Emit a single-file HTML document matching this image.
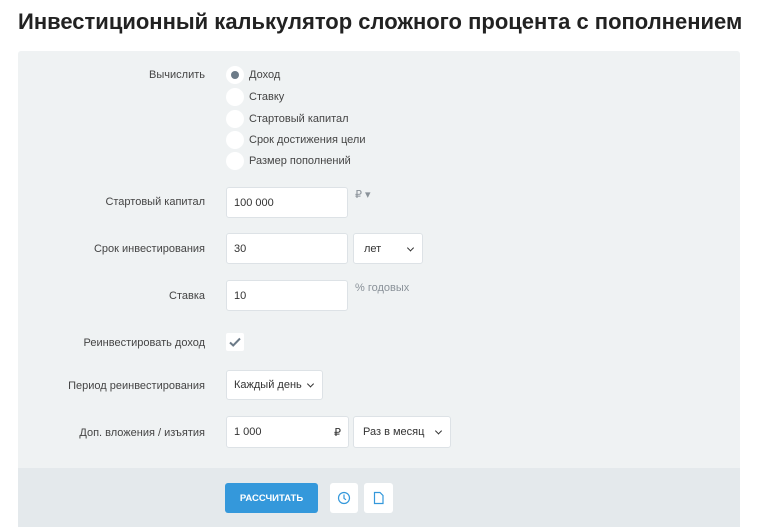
<!DOCTYPE html>
<html><head><meta charset="utf-8"><style>
*{box-sizing:border-box;margin:0;padding:0}
body{width:758px;height:527px;background:#fff;font-family:"Liberation Sans",sans-serif;color:#333;position:relative;overflow:hidden}
h1{position:absolute;left:18px;top:9px;font-size:22px;font-weight:bold;color:#222;white-space:nowrap}
.panel{position:absolute;left:18px;top:51px;width:722px;height:476px;background:#eff2f3;border-radius:3px}
.foot{position:absolute;left:18px;top:468px;width:722px;height:59px;background:#e4e9ec}
.lbl{position:absolute;right:553px;font-size:11px;color:#444;text-align:right;white-space:nowrap}
.t{position:absolute;font-size:11px;color:#444;white-space:nowrap}
.radio{position:absolute;left:226px;width:18px;height:18px;border-radius:50%;background:#fff}
.radio.on::after{content:"";position:absolute;left:5px;top:5px;width:8px;height:8px;border-radius:50%;background:#6c7b88}
.box{position:absolute;background:#fff;border:1px solid #dde2e6;border-radius:3px;font-size:11px;color:#333;padding-left:7px;display:flex;align-items:center}
.sel::after{content:"";position:absolute;right:9px;top:50%;width:4px;height:4px;border-right:1.5px solid #333;border-bottom:1.5px solid #333;transform:translateY(-70%) rotate(45deg)}
.gray{color:#8a9299}
</style></head><body>
<h1>Инвестиционный калькулятор сложного процента с пополнением</h1>
<div class="panel"></div>
<div class="foot"></div>

<div class="lbl" style="top:69px">Вычислить</div>
<div class="radio on" style="top:66px"></div><div class="t" style="left:249px;top:69px">Доход</div>
<div class="radio" style="top:88px"></div><div class="t" style="left:249px;top:91px">Ставку</div>
<div class="radio" style="top:110px"></div><div class="t" style="left:249px;top:113px">Стартовый капитал</div>
<div class="radio" style="top:131px"></div><div class="t" style="left:249px;top:134px">Срок достижения цели</div>
<div class="radio" style="top:152px"></div><div class="t" style="left:249px;top:155px">Размер пополнений</div>

<div class="lbl" style="top:196px">Стартовый капитал</div>
<div class="box" style="left:226px;top:187px;width:122px;height:31px">100 000</div>
<div class="t gray" style="left:355px;top:188px">₽ ▾</div>

<div class="lbl" style="top:243px">Срок инвестирования</div>
<div class="box" style="left:226px;top:233px;width:122px;height:31px">30</div>
<div class="box sel" style="left:353px;top:233px;width:70px;height:31px;padding-left:10px">лет</div>

<div class="lbl" style="top:290px">Ставка</div>
<div class="box" style="left:226px;top:280px;width:122px;height:31px">10</div>
<div class="t gray" style="left:355px;top:282px">% годовых</div>

<div class="lbl" style="top:337px">Реинвестировать доход</div>
<div style="position:absolute;left:226px;top:333px;width:18px;height:18px;background:#fff;border-radius:2px">
<svg width="18" height="18" viewBox="0 0 18 18"><path d="M4 9.5l3.2 3L14 5.5" fill="none" stroke="#6c7b88" stroke-width="2"/></svg></div>

<div class="lbl" style="top:380px">Период реинвестирования</div>
<div class="box sel" style="left:226px;top:370px;width:97px;height:30px">Каждый день</div>

<div class="lbl" style="top:427px">Доп. вложения / изъятия</div>
<div class="box" style="left:226px;top:416px;width:123px;height:32px">1 000<span style="position:absolute;right:7px">₽</span></div>
<div class="box sel" style="left:353px;top:416px;width:98px;height:32px;padding-left:9px">Раз в месяц</div>

<div style="position:absolute;left:225px;top:483px;width:93px;height:30px;background:#3498db;border-radius:3px;color:#fff;font-size:9.5px;font-weight:bold;display:flex;align-items:center;justify-content:center">РАССЧИТАТЬ</div>
<div style="position:absolute;left:330px;top:483px;width:28px;height:30px;background:#fff;border-radius:3px"><svg width="28" height="30"><circle cx="14" cy="15" r="5.5" fill="none" stroke="#3498db" stroke-width="1.2"/><path d="M14 11.5v3.8l2 1.5" fill="none" stroke="#3498db" stroke-width="1.2"/></svg></div>
<div style="position:absolute;left:364px;top:483px;width:29px;height:30px;background:#fff;border-radius:3px"><svg width="29" height="30"><path d="M10.5 9.5h5.5l3 3v8h-8.5z" fill="none" stroke="#3498db" stroke-width="1.2"/></svg></div>
</body></html>
